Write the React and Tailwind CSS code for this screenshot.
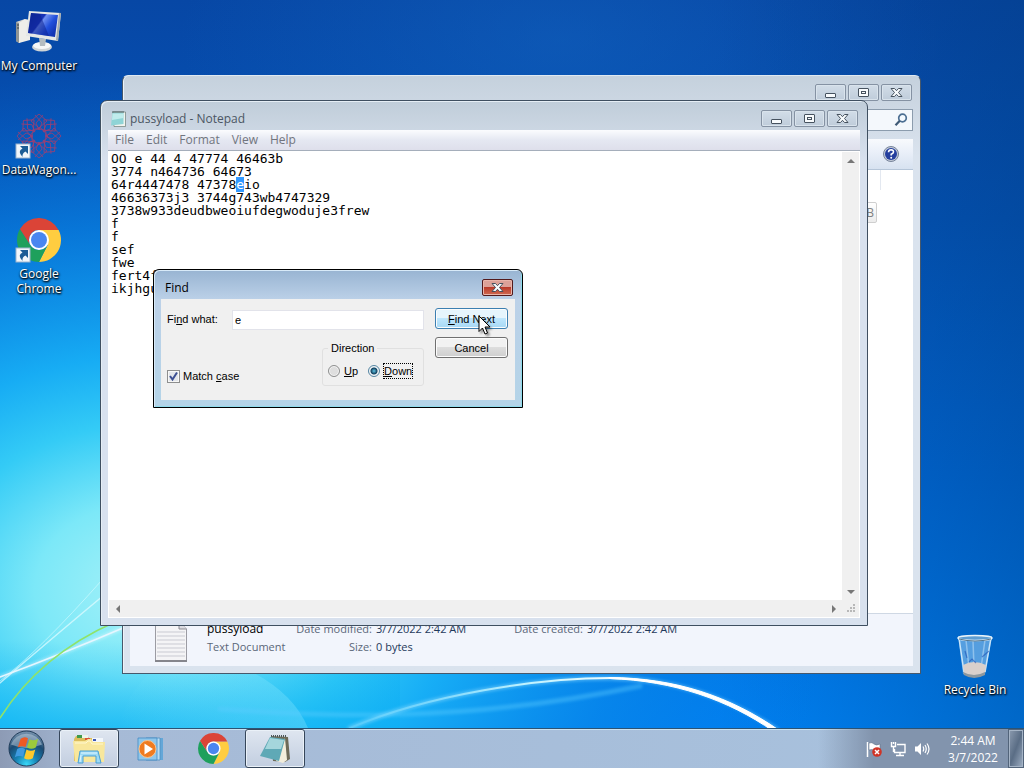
import { useEffect, useRef, useState } from "react";
import clsx from "clsx";

const NOTE_TEXT = `OO e 44 4 47774 46463b
3774 n464736 64673
64r4447478 47378eio
46636373j3 3744g743wb4747329
3738w933deudbweoiufdegwoduje3frew
f
f
sef
fwe
fert4f
ikjhgu`;

const MENUS = ["File", "Edit", "Format", "View", "Help"];

function Wallpaper() {
  return (
    <svg className="absolute inset-0 h-full w-full" viewBox="0 0 1024 728" preserveAspectRatio="none" aria-hidden="true">
      <defs>
        <linearGradient id="sky" x1="0" y1="0" x2="0" y2="1">
          <stop offset="0" stopColor="#0747a5" />
          <stop offset="0.3" stopColor="#0454b8" />
          <stop offset="0.65" stopColor="#0069d8" />
          <stop offset="1" stopColor="#0082f4" />
        </linearGradient>
        <linearGradient id="skyRight" x1="0" y1="0" x2="1" y2="0">
          <stop offset="0.7" stopColor="#003878" stopOpacity="0" />
          <stop offset="1" stopColor="#003878" stopOpacity="0.35" />
        </linearGradient>
        <radialGradient id="topGlow" gradientUnits="userSpaceOnUse" cx="0" cy="0" r="1" gradientTransform="translate(560 40) scale(380 200)">
          <stop offset="0" stopColor="#1468c4" stopOpacity="0.45" />
          <stop offset="1" stopColor="#1468c4" stopOpacity="0" />
        </radialGradient>
        <radialGradient id="glow" gradientUnits="userSpaceOnUse" cx="0" cy="0" r="1" gradientTransform="translate(150 590) scale(680 520)">
          <stop offset="0" stopColor="#a8f2f8" />
          <stop offset="0.17" stopColor="#7ce8f8" />
          <stop offset="0.32" stopColor="#34cbf6" />
          <stop offset="0.45" stopColor="#18b0f6" stopOpacity="0.95" />
          <stop offset="0.7" stopColor="#0a88e8" stopOpacity="0.65" />
          <stop offset="1" stopColor="#0670d8" stopOpacity="0" />
        </radialGradient>
        <linearGradient id="floor" x1="0" y1="0" x2="0" y2="1">
          <stop offset="0.88" stopColor="#0ab0f4" stopOpacity="0" />
          <stop offset="1" stopColor="#0ab0f4" stopOpacity="0.6" />
        </linearGradient>
        <linearGradient id="lens" x1="1" y1="0" x2="0" y2="0">
          <stop offset="0" stopColor="#9ceeff" stopOpacity="0.3" />
          <stop offset="1" stopColor="#9ceeff" stopOpacity="0" />
        </linearGradient>
        <linearGradient id="arc" x1="0" y1="0" x2="1" y2="0">
          <stop offset="0" stopColor="#8ee4ff" stopOpacity="0.2" />
          <stop offset="0.4" stopColor="#bdf2ff" />
          <stop offset="0.7" stopColor="#fff" />
        </linearGradient>
        <filter id="soft" x="-10%" y="-40%" width="120%" height="180%">
          <feGaussianBlur stdDeviation="1.5" />
        </filter>
      </defs>
      <rect width="1024" height="728" fill="url(#sky)" />
      <rect width="1024" height="728" fill="url(#topGlow)" />
      <rect width="1024" height="728" fill="url(#skyRight)" />
      <rect width="1024" height="728" fill="url(#glow)" />
      <rect width="400" height="728" fill="url(#floor)" />
      <path d="M118 728Q130 680 170 660H225Q290 684 308 728Z" fill="url(#lens)" />
      <g fill="none" strokeLinecap="round">
        <path d="M0 681Q40 650 102 580" stroke="#d8fbff" strokeWidth="1" opacity="0.6" />
        <path d="M0 683Q50 640 110 590" stroke="#e4fcff" strokeWidth="1.5" opacity="0.7" />
        <path d="M0 677Q60 655 130 625" stroke="#fff" strokeWidth="4" opacity="0.35" filter="url(#soft)" />
        <path d="M0 677Q60 655 130 625" stroke="#e6f6ff" strokeWidth="1.5" />
        <path d="M0 718Q40 655 115 622" stroke="#8fe36a" strokeWidth="1.5" />
        <path d="M220 709C320 716 460 724 640 686" stroke="#5cccff" strokeWidth="5" opacity="0.4" filter="url(#soft)" />
        <path d="M350 728C430 694 540 678 610 678C675 679 730 698 777 730" stroke="#8fdcff" strokeWidth="5" opacity="0.45" filter="url(#soft)" />
        <path d="M350 728C430 694 540 678 610 678C675 679 730 698 777 730" stroke="url(#arc)" strokeWidth="2" />
        <path d="M610 677.500C675 678 730 696 780 731H773C728 700 675 681 610 678.500Z" fill="#fff" stroke="#fff" strokeWidth="1" />
      </g>
    </svg>
  );
}

function ComputerIcon() {
  return (
    <svg viewBox="0 0 48 48" className="h-12 w-12" aria-hidden="true">
      <defs>
        <linearGradient id="screen" x1="0" y1="0" x2="1" y2="0.6">
          <stop offset="0" stopColor="#0a2a9c" />
          <stop offset="0.45" stopColor="#1733b8" />
          <stop offset="0.5" stopColor="#6f8ff0" />
          <stop offset="0.75" stopColor="#2150dc" />
          <stop offset="1" stopColor="#1134b4" />
        </linearGradient>
      </defs>
      <path d="M1 12L10 9V29L4 33L1 31Z" fill="#d5d6d2" />
      <path d="M1 12L4 13V33L1 31Z" fill="#8f9494" />
      <path d="M2 15H5M2 18H5" stroke="#3c4448" />
      <path d="M10 9L15 10V30L4 33V13Z" fill="#eeeeea" />
      <ellipse cx="27" cy="37" rx="10" ry="4.500" fill="#cfd4d6" />
      <ellipse cx="27" cy="35.500" rx="9" ry="3.500" fill="#f6f7f7" />
      <path d="M24 28L31 29L30 36H25Z" fill="#b4bcc0" />
      <path d="M14 1L46 3L43 31L11 26Z" fill="#e4e7e6" />
      <path d="M44 3L46 3L43 31L41 30Z" fill="#a3aaad" />
      <path d="M16 3L43 5L40 27L13 23Z" fill="url(#screen)" />
      <path d="M16 3L25 4L34 26L13 23Z" fill="#0c1f8c" opacity="0.5" />
    </svg>
  );
}

function Shortcut() {
  return (
    <g>
      <rect x="1" y="30" width="14" height="14" fill="#f1f6fb" stroke="#9db4cc" />
      <path d="M5 32H13V40L10.500 37.500Q7 39 7.500 43Q2 37 7.500 34.500Z" fill="#1c5c96" />
    </g>
  );
}

function DataWagonIcon() {
  return (
    <svg viewBox="0 0 48 48" className="h-12 w-12" aria-hidden="true">
      <g fill="none" stroke="#e03450" strokeWidth="0.800" opacity="0.7">
        {[0, 45, 90, 135, 180, 225, 270, 315].map((angle) => (
          <g key={angle} transform={`rotate(${angle} 24 22)`}>
            <path d="M24 0L32 7L24 14L16 7Z" />
            <path d="M20 1L27 9L24 16M28 1L21 9L24 16" />
            <path d="M24 13L30 17" />
          </g>
        ))}
        <circle cx="24" cy="22" r="7" />
      </g>
      <Shortcut />
    </svg>
  );
}

function ChromeMark() {
  return (
    <g>
      <path d="M24 12H43.600A22 22 0 0 1 24 44L32.700 27Z" fill="#ffcd40" />
      <path d="M4.950 11L15.300 27A10 10 0 0 0 32.700 27L24 44A22 22 0 0 1 4.950 11Z" fill="#1ea05c" />
      <path d="M4.950 11A22 22 0 0 1 43.600 12H24A10 10 0 0 0 15.300 27Z" fill="#db4437" />
      <circle cx="24" cy="22" r="10" fill="#fff" />
      <circle cx="24" cy="22" r="8" fill="#4a86f0" />
    </g>
  );
}

function RecycleIcon() {
  return (
    <svg viewBox="0 0 48 48" className="h-12 w-12" aria-hidden="true">
      <path d="M7 2L12 40Q24 46 34 40L41 2Z" fill="#a9d5f6" opacity="0.5" />
      <path d="M8 4L13 38M40 4L34 38" stroke="#d5ecfb" strokeWidth="1.500" opacity="0.9" />
      <path d="M15 6L18 34M22 7L23 33M34 6L30 34" stroke="#e6f5ff" strokeWidth="1.500" opacity="0.4" />
      <path d="M12 31Q23 25 35 31L34 39Q23 46 13 39Z" fill="#d9d0cc" />
      <path d="M12 38Q23 44 34 38V41Q23 47 13 41Z" fill="#8d989f" />
      <path d="M14 17L16 24M31 23L38 17M18 28L21 25L25 29" stroke="#2052b4" strokeWidth="1.200" fill="none" opacity="0.6" />
      <ellipse cx="24" cy="4" rx="17" ry="2.500" fill="#5d9dd2" stroke="#e8f3fa" strokeWidth="1.500" />
      <path d="M8 5Q24 9 40 5" stroke="#52748c" fill="none" />
    </svg>
  );
}

function NotepadIcon({ className }) {
  return (
    <svg viewBox="0 0 16 16" className={className} aria-hidden="true">
      <path d="M3 1H15.500V15.500H4Z" fill="#f1f3ee" stroke="#6d7c78" strokeWidth="0.700" />
      <path d="M2.500 1.500H13.500V13L1 14.500Z" fill="#8fd4d6" />
      <path d="M2.500 2.500H13.500V7L2 9Z" fill="#c0ecec" />
      <path d="M3 0V2M5 0V2M7 0V2M9 0V2M11 0V2M13 0V2" stroke="#4c6060" />
    </svg>
  );
}

function DesktopIcon({ label, children }) {
  return (
    <a
      href="#"
      className="flex w-[78px] flex-col items-center text-center text-[12px] leading-[15px] text-white [text-shadow:1px_1px_2px_#000,0_1px_2px_#000]"
    >
      {children}
      <span>{label}</span>
    </a>
  );
}

// glyphs for the caption buttons: light fill with a slate outline
function CaptionGlyph({ kind }) {
  return (
    <svg viewBox="0 0 15 13" className="h-[13px] w-[15px]" fill="#f8fbfd" stroke="#46525f" strokeWidth="1" aria-hidden="true">
      {kind === "Minimize" && <rect x="2.500" y="7.500" width="10" height="4" rx="0.500" />}
      {kind === "Maximize" && (
        <>
          <rect x="2.500" y="2.500" width="10" height="8" rx="0.500" />
          <rect x="5.500" y="5.500" width="4" height="2" />
        </>
      )}
      {kind === "Close" && (
        <path d="M2 2.500H5.500L7.500 4.700L9.500 2.500H13L9.500 6.500L13 10.500H9.500L7.500 8.300L5.500 10.500H2L5.500 6.500Z" />
      )}
    </svg>
  );
}

function CaptionButtons() {
  return (
    <div className="flex gap-[2px]">
      {["Minimize", "Maximize", "Close"].map((kind) => (
        <button
          key={kind}
          type="button"
          aria-label={kind}
          className="flex h-[17px] w-[31px] items-center justify-center rounded-[2px] border border-[#8592a3] bg-linear-to-b from-[#d2dde8] to-[#bfccda] shadow-[inset_0_0_0_1px_#d9e3ec]"
        >
          <CaptionGlyph kind={kind} />
        </button>
      ))}
    </div>
  );
}

function ExplorerWindow() {
  return (
    <section
      aria-label="File explorer"
      className="absolute top-[75px] right-[103px] bottom-[54px] left-[122px] flex flex-col rounded-t-[6px] border border-[#47586b] border-t-[#dfe9f2] bg-linear-to-b from-[#c5d1dd] to-[#dae3ee] to-[80px] px-[7px] pb-[7px] shadow-[inset_1px_0_0_#edf3f8]"
    >
      <header className="flex h-[33px] shrink-0 justify-end pt-2 pr-px">
        <CaptionButtons />
      </header>
      <div className="mb-2 flex shrink-0 justify-end">
        <div className="flex h-[22px] w-48 items-center justify-end border border-[#8c9cad] bg-[#f4f8fc] pr-1">
          <svg viewBox="0 0 14 14" className="h-[14px] w-[14px]" fill="none" aria-hidden="true">
            <circle cx="8.500" cy="5" r="3.800" stroke="#4c6f92" strokeWidth="1.700" fill="#f4faff" />
            <path d="M5.800 7.800L1.500 12.300" stroke="#3f5a76" strokeWidth="2.200" />
          </svg>
        </div>
      </div>
      <div className="flex h-[31px] shrink-0 items-center justify-end border-b border-[#b5c5d8] bg-linear-to-b from-[#f8fafd] via-[#e8eef8] to-[#d7e2f0] pr-[14px]">
        <button type="button" aria-label="Help">
          <svg viewBox="0 0 16 16" className="h-4 w-4" aria-hidden="true">
            <circle cx="8" cy="8" r="7.500" fill="#c5cdd9" stroke="#76839a" />
            <circle cx="8" cy="8" r="6" fill="#253f9e" />
            <path d="M5.500 6.200Q5.700 3.800 8.100 3.800Q10.600 3.900 10.500 6Q10.400 7.300 8.200 8.300V9.400" fill="none" stroke="#fff" strokeWidth="1.600" />
            <circle cx="8.200" cy="11.700" r="1" fill="#fff" />
          </svg>
        </button>
      </div>
      <div className="flex min-h-0 flex-1 flex-col items-end bg-white">
        <div className="mr-8 h-5 w-px bg-[#e3e8f0]" />
        <div className="mt-3 mr-9 flex h-[21px] items-center rounded-[2px] border border-[#cfcfcf] bg-linear-to-b from-white to-[#ececec] px-[2px] text-[12px] text-[#808080]">
          0 KB
        </div>
      </div>
      <footer className="flex h-[53px] shrink-0 border-t border-[#cfd8e4] bg-[#f2f5fc] pt-[6px] pl-6 text-[11px] leading-[18px] whitespace-nowrap text-[#5a6779]">
        <svg viewBox="0 0 34 42" className="mr-[19px] h-[42px] w-[34px]" aria-hidden="true">
          <path d="M1.500 1.500H25L32.500 9V40.500H1.500Z" fill="#f4f4f6" stroke="#9b9ba3" />
          <path d="M25 1.500V9H32.500" fill="#dcdce2" stroke="#8a8a92" />
          <path d="M3 12H31M3 16H31M3 20H31M3 24H31M3 28H31M3 32H31M3 36H31" stroke="#c9cad2" />
          <path d="M1 41H33" stroke="#85858c" strokeWidth="2" />
        </svg>
        <div className="w-[87px]">
          <div className="text-[12px] text-black">pussyload</div>
          <div>Text Document</div>
        </div>
        <dl className="grid grid-cols-[78px_134px_69px_auto] content-start gap-x-1 [&>dd]:text-[#1e395b] [&>dt]:text-right">
          <dt>Date modified:</dt>
          <dd>3/7/2022 2:42 AM</dd>
          <dt>Date created:</dt>
          <dd>3/7/2022 2:42 AM</dd>
          <dt>Size:</dt>
          <dd>0 bytes</dd>
        </dl>
      </footer>
    </section>
  );
}

function ScrollArrow({ label, d }) {
  return (
    <button type="button" aria-label={label} className="flex h-[17px] w-[17px] items-center justify-center">
      <svg viewBox="0 0 8 8" className="h-2 w-2" fill="#777" aria-hidden="true">
        <path d={d} />
      </svg>
    </button>
  );
}

function NotepadWindow() {
  const textRef = useRef(null);

  // show the last search hit
  useEffect(() => {
    const start = NOTE_TEXT.indexOf("eio");
    textRef.current.focus();
    textRef.current.setSelectionRange(start, start + 1);
  }, []);

  return (
    <section
      aria-label="pussyload - Notepad"
      className="absolute top-[100px] right-[156px] bottom-[102px] left-[100px] flex flex-col rounded-t-[7px] border border-[#3f4f60] bg-linear-to-b from-[#c0cdd9] to-[#d8e1ee] to-[60px] px-[7px] pb-[7px] shadow-[inset_1px_1px_0_#e6eef5]"
    >
      <header className="flex h-[29px] shrink-0 justify-between pt-[9px] pr-[2px] pl-[2px]">
        <div className="flex h-[17px] items-center gap-1 text-[12px] text-[#4b5663]">
          <NotepadIcon className="h-4 w-4" />
          <h1>pussyload - Notepad</h1>
        </div>
        <CaptionButtons />
      </header>
      <nav className="flex h-[21px] shrink-0 items-center gap-3 border-b border-[#a5aebb] bg-linear-to-b from-[#fbfcfe] via-[#e5e8f2] to-[#dedfeb] pl-[7px] text-[12px] text-[#71757e]">
        {MENUS.map((menu) => (
          <button key={menu} type="button">
            {menu}
          </button>
        ))}
      </nav>
      <div className="grid min-h-0 flex-1 grid-cols-[1fr_17px] grid-rows-[1fr_17px] border border-white bg-[#f0f0f0]">
        <textarea
          ref={textRef}
          aria-label="Document text"
          defaultValue={NOTE_TEXT}
          spellCheck={false}
          wrap="off"
          className="resize-none overflow-hidden bg-white pl-[2px] font-['DejaVu_Sans_Mono',monospace] text-[13px] leading-[13px] text-black outline-none selection:bg-[#3399ff] selection:text-white"
        />
        <div className="flex flex-col justify-between">
          <ScrollArrow label="Scroll up" d="M0 6L4 2L8 6Z" />
          <ScrollArrow label="Scroll down" d="M0 2L4 6L8 2Z" />
        </div>
        <div className="flex justify-between">
          <ScrollArrow label="Scroll left" d="M6 0L2 4L6 8Z" />
          <ScrollArrow label="Scroll right" d="M2 0L6 4L2 8Z" />
        </div>
        <svg viewBox="0 0 17 17" className="h-[17px] w-[17px]" fill="#b8b8b8" aria-hidden="true">
          <path d="M11 4h2v2h-2zM8 7h2v2H8zM11 7h2v2h-2zM5 10h2v2H5zM8 10h2v2H8zM11 10h2v2h-2z" />
        </svg>
      </div>
    </section>
  );
}

function DialogButton({ primary, children }) {
  return (
    <button
      type="button"
      className={clsx(
        "h-[21px] rounded-[3px] border pt-px text-center shadow-[inset_0_0_0_1px_#fcfcfc]",
        primary
          ? "border-[#3c7fb1] bg-linear-to-b from-[#e6f5fd] from-50% via-[#bee6fd] via-50% to-[#a7d9f5]"
          : "border-[#707070] bg-linear-to-b from-[#f2f2f2] from-50% via-[#dddddd] via-50% to-[#cfcfcf]"
      )}
    >
      {children}
    </button>
  );
}

function Direction({ value, current, onChange, children }) {
  return (
    <label className="flex items-center gap-1">
      <input
        type="radio"
        name="direction"
        value={value}
        checked={current === value}
        onChange={() => onChange(value)}
        className="h-3 w-3 appearance-none rounded-full border border-[#8e8f8f] bg-[#dedede] shadow-[inset_0_0_0_1px_#f6f6f6] checked:border-[#5586a3] checked:bg-[radial-gradient(circle,#5fc3e4_0,#12405e_3px,#e4eef4_4px)]"
      />
      <span className={clsx("leading-[14px]", current === value && "outline-1 outline-dotted outline-black")}>{children}</span>
    </label>
  );
}

function FindDialog() {
  const [term, setTerm] = useState("e");
  const [matchCase, setMatchCase] = useState(true);
  const [direction, setDirection] = useState("down");

  return (
    <section
      role="dialog"
      aria-label="Find"
      className="absolute top-[269px] left-[153px] flex h-[139px] w-[370px] flex-col rounded-t-[6px] border border-black bg-linear-to-b from-[#98b4d2] via-[#bcd1e8] via-[30px] to-[#b4d4e8] px-[7px] pb-[7px] font-['Liberation_Sans',Arial,sans-serif] text-[11px] leading-[13px] text-black shadow-[inset_1px_1px_0_#d8eaf8,inset_-1px_-1px_0_#8fdcec]"
    >
      <header className="flex h-[29px] shrink-0 items-start justify-between pt-[9px] pr-[2px] pl-1">
        <h2 className="font-['Open_Sans','Noto_Sans',sans-serif] text-[12px] leading-[17px]">Find</h2>
        <button
          type="button"
          aria-label="Close"
          className="flex h-[17px] w-[31px] items-center justify-center rounded-[2px] border border-[#521a1c] bg-linear-to-b from-[#dca198] from-45% via-[#b93a2a] via-50% to-[#cf6a52] shadow-[inset_0_0_0_1px_#e9b5ab]"
        >
          <CaptionGlyph kind="Close" />
        </button>
      </header>
      <form className="flex min-h-0 flex-1 items-start gap-[11px] bg-[#f0f0f0] pt-[9px] pr-[7px] pl-[6px]" onSubmit={(e) => e.preventDefault()}>
        <div className="flex flex-1 flex-col gap-3 pt-[2px]">
          <div className="flex items-center">
            <label htmlFor="find-what" className="w-[65px] pb-[2px]">
              Fi<u>n</u>d what:
            </label>
            <input
              id="find-what"
              value={term}
              onChange={(e) => setTerm(e.target.value)}
              className="h-5 min-w-0 flex-1 border border-[#e2e3ea] bg-white px-[2px] outline-none"
            />
          </div>
          <div className="flex items-end justify-between">
            <label className="flex items-center gap-[3px] pb-[3px]">
              <span className="relative flex">
                <input
                  type="checkbox"
                  checked={matchCase}
                  onChange={(e) => setMatchCase(e.target.checked)}
                  className="h-[13px] w-[13px] appearance-none border border-[#8e8f8f] bg-[#e3e6ea] shadow-[inset_0_0_0_1px_#f8f8f8]"
                />
                {matchCase && (
                  <svg viewBox="0 0 13 13" className="pointer-events-none absolute inset-0 h-[13px] w-[13px]" fill="none" stroke="#3c4f92" strokeWidth="2" aria-hidden="true">
                    <path d="M3 6L5.500 9.500L10 2.500" />
                  </svg>
                )}
              </span>
              <span>
                Match <u>c</u>ase
              </span>
            </label>
            <fieldset className="h-11 w-[102px] rounded-[3px] border border-[#e0e0e0] px-[5px]">
              <legend className="px-[3px]">Direction</legend>
              <div className="flex gap-[10px] pt-[9px]">
                <Direction value="up" current={direction} onChange={setDirection}>
                  <u>U</u>p
                </Direction>
                <Direction value="down" current={direction} onChange={setDirection}>
                  <u>D</u>own
                </Direction>
              </div>
            </fieldset>
          </div>
        </div>
        <div className="flex w-[73px] flex-col gap-2">
          <DialogButton primary>
            <u>F</u>ind Next
          </DialogButton>
          <DialogButton>Cancel</DialogButton>
        </div>
      </form>
    </section>
  );
}

function MousePointer() {
  return (
    <svg viewBox="0 0 13 20" className="pointer-events-none absolute top-[315px] left-[478px] h-5 w-[13px] drop-shadow-[2px_2px_1px_rgba(0,0,0,0.4)]" aria-hidden="true">
      <path d="M1 1V16.500L4.500 13L7 19L9.500 18L7 12H12Z" fill="#fff" stroke="#000" />
    </svg>
  );
}

function TaskButton({ label, active, children }) {
  return (
    <button
      type="button"
      aria-label={label}
      className={clsx(
        "flex h-[39px] w-[60px] items-center justify-center rounded-[3px]",
        active && "border border-[#36465a] bg-linear-to-b from-[#dfe6f0] to-[#c2cee0] shadow-[inset_0_0_0_1px_#eaf1f8]"
      )}
    >
      {children}
    </button>
  );
}

function Taskbar() {
  return (
    <footer className="relative flex h-10 shrink-0 items-stretch justify-between border-t border-[#2c5374] bg-linear-to-r from-[#8d9bb5] via-[#a6bad6] via-[90px] to-[#a8c2de] shadow-[inset_0_1px_0_#c9e2f2]">
      <div className="flex items-center gap-[2px]">
        <button type="button" aria-label="Start" className="flex w-[57px] items-center pl-2">
          <svg viewBox="0 0 38 38" className="h-[37px] w-[37px]" aria-hidden="true">
            <defs>
              <radialGradient id="orb" cx="0.5" cy="0.95" r="0.9">
                <stop offset="0" stopColor="#38d8f8" />
                <stop offset="0.35" stopColor="#1782b4" />
                <stop offset="0.7" stopColor="#1b4a72" />
                <stop offset="1" stopColor="#6f8ca8" />
              </radialGradient>
            </defs>
            <circle cx="19" cy="19" r="18" fill="url(#orb)" stroke="#203c58" />
            <path d="M3 15A17 17 0 0 1 35 15Q19 22 3 15Z" fill="#e4eef6" opacity="0.4" />
            <path d="M13 9Q17 6 20.500 8.500L18 17.500Q14 15.500 10 18Z" fill="#ee5a25" />
            <path d="M22 9.500Q26 12 31 9L28.500 18Q24 20.500 19.500 18Z" fill="#9ccb3c" />
            <path d="M9.500 19.500Q13.500 17 17.500 19.500L15.500 27.500Q11 25.500 7 28Z" fill="#3f9ae0" />
            <path d="M19 20Q23.500 22.500 28 20L25.500 29Q21 31.500 16.500 29Z" fill="#fdc92c" />
          </svg>
        </button>
        <TaskButton label="Windows Explorer" active>
          <svg viewBox="0 0 34 32" className="h-8 w-[34px]" aria-hidden="true">
            <path d="M4 3H15L17 5H21L24 7H31V28H2V6Z" fill="#dcbc5c" />
            <path d="M5 2H10V5H5Z" fill="#3f9a4b" />
            <path d="M10 2H16V5H10Z" fill="#eef4ea" />
            <path d="M13 5H18V7H13Z" fill="#d95035" />
            <path d="M20 5H31V9H20Z" fill="#f3f7fb" />
            <path d="M21 6H24V8H21Z" fill="#3d58b4" />
            <path d="M1 8H13L16 6H19L21 9H33L32 29H3Z" fill="#f8e79c" />
            <path d="M3 10H14L16 8H18L20 11H31" stroke="#fff8d0" fill="none" />
            <path d="M8 18H26L29 30H24V23H11V30H6Z" fill="#9cdaf6" stroke="#4a9fd2" />
            <path d="M9 20H25M8 29L9 22" stroke="#dff5ff" fill="none" />
          </svg>
        </TaskButton>
        <TaskButton label="Media Player">
          <svg viewBox="0 0 30 26" className="h-[26px] w-[30px]" aria-hidden="true">
            <path d="M10 2H27V24H10Z" fill="#64a7d8" />
            <path d="M10 2H24V24H10Z" fill="#b8dcf4" stroke="#4f90c0" strokeWidth="0.800" />
            <path d="M2 2H21V24H2Z" fill="#8fc6ea" stroke="#438bc4" strokeWidth="0.800" />
            <circle cx="11.500" cy="13" r="8.500" fill="#ef7b20" stroke="#f9c48e" />
            <path d="M8.500 7.500L17 13L8.500 18.500Z" fill="#fff" />
          </svg>
        </TaskButton>
        <TaskButton label="Google Chrome">
          <svg viewBox="2 0 44 44" className="h-[31px] w-[31px]" aria-hidden="true">
            <ChromeMark />
          </svg>
        </TaskButton>
        <TaskButton label="Notepad" active>
          <svg viewBox="0 0 32 30" className="h-[30px] w-8" aria-hidden="true">
            <path d="M12 2L29 3L31 25L26 28L14 27Z" fill="#6d6a58" />
            <path d="M26 4L28 26L24 29L17 27Z" fill="#f3eedc" />
            <path d="M11 3L26 5L20 27L1 22Z" fill="#5fa9b6" />
            <path d="M11 4L25 6L22 15L6 15Z" fill="#a5d6dc" />
            <path d="M12 2H27" stroke="#4b5759" strokeWidth="2" strokeDasharray="1 1" />
          </svg>
        </TaskButton>
      </div>
      <div className="flex items-center bg-linear-to-r from-[#8496af]/0 to-[#8294ad] to-[55px] pl-12 text-[12px] leading-[17px] text-white">
        <div className="flex items-center gap-2">
          <button type="button" aria-label="Action Center">
            <svg viewBox="0 0 16 16" className="h-4 w-4" aria-hidden="true">
              <path d="M1.500 1V16" stroke="#fff" strokeWidth="1.500" />
              <path d="M3 2Q6 1 8 3T14 3V9Q10 10 8 9T3 9Z" fill="#fff" stroke="#55657b" strokeWidth="0.500" />
              <circle cx="11" cy="11" r="4.800" fill="#d03426" />
              <path d="M9 9L13 13M13 9L9 13" stroke="#fff" strokeWidth="1.500" />
            </svg>
          </button>
          <button type="button" aria-label="Network">
            <svg viewBox="0 0 16 16" className="h-4 w-4" fill="none" stroke="#fff" strokeWidth="1.400" aria-hidden="true">
              <path d="M7 3.500H15V11.500H4.500V8M6 14.500H14M10 12V14" />
              <path d="M1.500 1V5.500H5.500V1M3.500 1V3M3.500 5.500V11" />
            </svg>
          </button>
          <button type="button" aria-label="Volume">
            <svg viewBox="0 0 16 16" className="h-4 w-4" aria-hidden="true">
              <path d="M1 5.500H3.500L7 2V14L3.500 10.500H1Z" fill="#fff" />
              <path d="M9 5.500Q10.500 8 9 10.500M11 4Q13.500 8 11 12M13 2.500Q17 8 13 13.500" fill="none" stroke="#fff" strokeWidth="1.200" />
            </svg>
          </button>
        </div>
        <div className="w-[78px] pl-2 text-center">
          <div>2:44 AM</div>
          <div>3/7/2022</div>
        </div>
        <button
          type="button"
          aria-label="Show desktop"
          className="h-full w-4 border border-[#52647a] bg-linear-to-br from-[#8d9cb0] via-[#5a6d85] to-[#a0b0c4] shadow-[inset_0_0_0_1px_#a5b4c6]"
        />
      </div>
    </footer>
  );
}

export default function App() {
  return (
    <div className="flex h-screen flex-col overflow-hidden font-['Open_Sans','Noto_Sans',sans-serif]">
      <main className="relative min-h-0 flex-1 overflow-hidden">
        <Wallpaper />
        <div className="relative flex h-full items-start justify-between">
          <div className="flex flex-col gap-[41px] pt-[10px]">
            <DesktopIcon label="My Computer">
              <ComputerIcon />
            </DesktopIcon>
            <DesktopIcon label="DataWagon...">
              <DataWagonIcon />
            </DesktopIcon>
            <DesktopIcon label="Google Chrome">
              <svg viewBox="0 0 48 48" className="h-12 w-12" aria-hidden="true">
                <ChromeMark />
                <Shortcut />
              </svg>
            </DesktopIcon>
          </div>
          <div className="self-end pr-[10px] pb-[31px]">
            <DesktopIcon label="Recycle Bin">
              <RecycleIcon />
            </DesktopIcon>
          </div>
        </div>
        <ExplorerWindow />
        <NotepadWindow />
        <FindDialog />
        <MousePointer />
      </main>
      <Taskbar />
    </div>
  );
}
